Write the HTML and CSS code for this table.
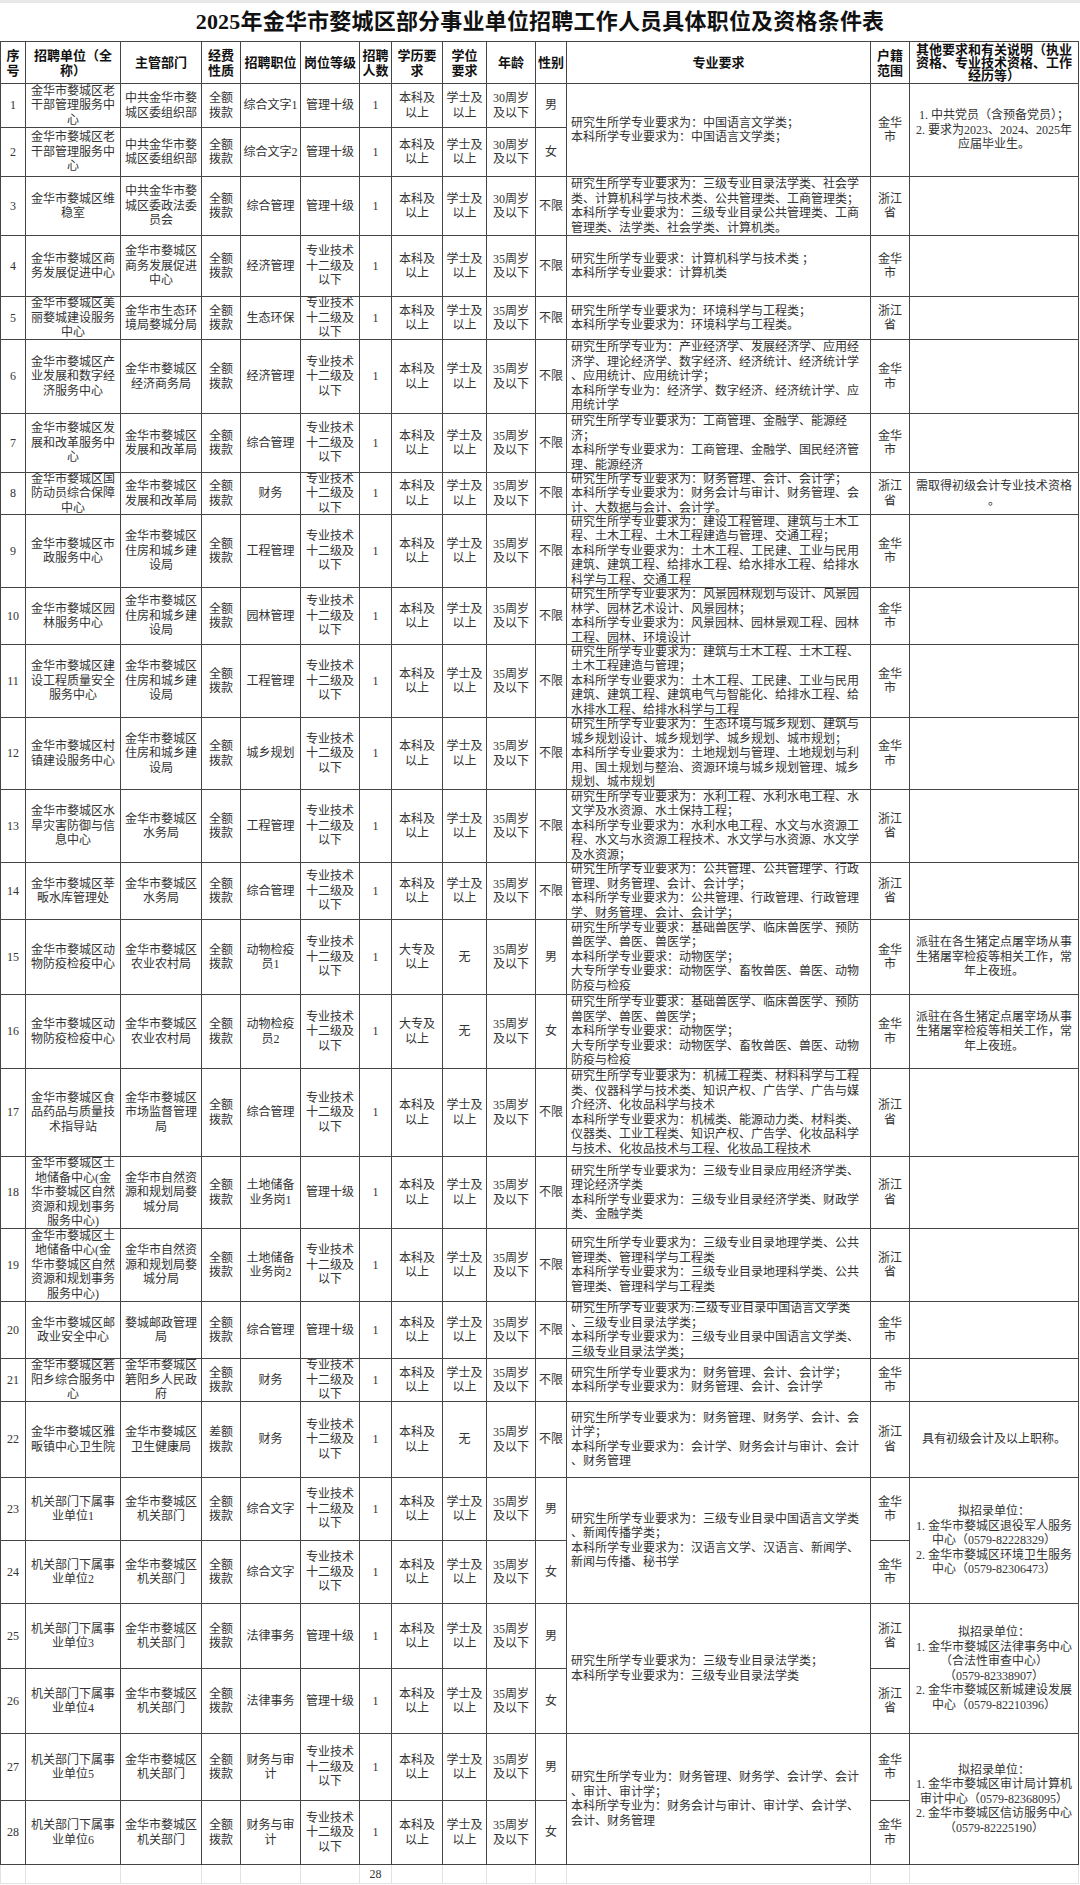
FILE: index.html
```html
<!DOCTYPE html>
<html lang="zh-CN">
<head>
<meta charset="utf-8">
<title>2025年金华市婺城区部分事业单位招聘工作人员具体职位及资格条件表</title>
<link rel="stylesheet" href="styles.css">
</head>
<body>
<div class="title">2025年金华市婺城区部分事业单位招聘工作人员具体职位及资格条件表</div>
<div class="sheet">
  <div class="c h">序<br>号</div><div class="c h">招聘单位（全<br>称）</div><div class="c h">主管部门</div><div class="c h">经费<br>性质</div><div class="c h">招聘职位</div><div class="c h">岗位等级</div><div class="c h">招聘<br>人数</div><div class="c h">学历要<br>求</div><div class="c h">学位<br>要求</div><div class="c h">年龄</div><div class="c h">性别</div><div class="c h">专业要求</div><div class="c h">户籍<br>范围</div><div class="c h hx">其他要求和有关说明（执业<br>资格、专业技术资格、工作<br>经历等）</div>

  <div class="c">1</div><div class="c">金华市婺城区老干部管理服务中心</div><div class="c">中共金华市婺城区委组织部</div><div class="c">全额拨款</div><div class="c">综合文字1</div><div class="c">管理十级</div><div class="c">1</div><div class="c">本科及以上</div><div class="c">学士及以上</div><div class="c">30周岁及以下</div><div class="c">男</div><div class="c m s2">研究生所学专业要求为：中国语言文学类；<br>本科所学专业要求为：中国语言文学类；</div><div class="c s2">金华市</div><div class="c o s2">1. 中共党员（含预备党员）；<br>2. 要求为2023、2024、2025年<br>应届毕业生。</div>

  <div class="c">2</div><div class="c">金华市婺城区老干部管理服务中心</div><div class="c">中共金华市婺城区委组织部</div><div class="c">全额拨款</div><div class="c">综合文字2</div><div class="c">管理十级</div><div class="c">1</div><div class="c">本科及以上</div><div class="c">学士及以上</div><div class="c">30周岁及以下</div><div class="c">女</div>

  <div class="c">3</div><div class="c">金华市婺城区维稳室</div><div class="c">中共金华市婺城区委政法委员会</div><div class="c">全额拨款</div><div class="c">综合管理</div><div class="c">管理十级</div><div class="c">1</div><div class="c">本科及以上</div><div class="c">学士及以上</div><div class="c">30周岁及以下</div><div class="c">不限</div><div class="c m">研究生所学专业要求为：三级专业目录法学类、社会学<br>类、计算机科学与技术类、公共管理类、工商管理类；<br>本科所学专业要求为：三级专业目录公共管理类、工商<br>管理类、法学类、社会学类、计算机类。</div><div class="c">浙江省</div><div class="c o"></div>

  <div class="c">4</div><div class="c">金华市婺城区商务发展促进中心</div><div class="c">金华市婺城区商务发展促进中心</div><div class="c">全额拨款</div><div class="c">经济管理</div><div class="c">专业技术十二级及以下</div><div class="c">1</div><div class="c">本科及以上</div><div class="c">学士及以上</div><div class="c">35周岁及以下</div><div class="c">不限</div><div class="c m">研究生所学专业要求：计算机科学与技术类 ；<br>本科所学专业要求：计算机类</div><div class="c">金华市</div><div class="c o"></div>

  <div class="c">5</div><div class="c">金华市婺城区美丽婺城建设服务中心</div><div class="c">金华市生态环境局婺城分局</div><div class="c">全额拨款</div><div class="c">生态环保</div><div class="c">专业技术十二级及以下</div><div class="c">1</div><div class="c">本科及以上</div><div class="c">学士及以上</div><div class="c">35周岁及以下</div><div class="c">不限</div><div class="c m">研究生所学专业要求为：环境科学与工程类；<br>本科所学专业要求为：环境科学与工程类。</div><div class="c">浙江省</div><div class="c o"></div>

  <div class="c">6</div><div class="c">金华市婺城区产业发展和数字经济服务中心</div><div class="c">金华市婺城区经济商务局</div><div class="c">全额拨款</div><div class="c">经济管理</div><div class="c">专业技术十二级及以下</div><div class="c">1</div><div class="c">本科及以上</div><div class="c">学士及以上</div><div class="c">35周岁及以下</div><div class="c">不限</div><div class="c m">研究生所学专业为：产业经济学、发展经济学、应用经<br>济学、理论经济学、数字经济、经济统计、经济统计学<br>、应用统计、应用统计学；<br>本科所学专业为：经济学、数字经济、经济统计学、应<br>用统计学</div><div class="c">金华市</div><div class="c o"></div>

  <div class="c">7</div><div class="c">金华市婺城区发展和改革服务中心</div><div class="c">金华市婺城区发展和改革局</div><div class="c">全额拨款</div><div class="c">综合管理</div><div class="c">专业技术十二级及以下</div><div class="c">1</div><div class="c">本科及以上</div><div class="c">学士及以上</div><div class="c">35周岁及以下</div><div class="c">不限</div><div class="c m">研究生所学专业要求为：工商管理、金融学、能源经<br>济；<br>本科所学专业要求为：工商管理、金融学、国民经济管<br>理、能源经济</div><div class="c">金华市</div><div class="c o"></div>

  <div class="c">8</div><div class="c">金华市婺城区国防动员综合保障中心</div><div class="c">金华市婺城区发展和改革局</div><div class="c">全额拨款</div><div class="c">财务</div><div class="c">专业技术十二级及以下</div><div class="c">1</div><div class="c">本科及以上</div><div class="c">学士及以上</div><div class="c">35周岁及以下</div><div class="c">不限</div><div class="c m">研究生所学专业要求为：财务管理、会计、会计学；<br>本科所学专业要求为：财务会计与审计、财务管理、会<br>计、大数据与会计、会计学。</div><div class="c">浙江省</div><div class="c o">需取得初级会计专业技术资格<br>。</div>

  <div class="c">9</div><div class="c">金华市婺城区市政服务中心</div><div class="c">金华市婺城区住房和城乡建设局</div><div class="c">全额拨款</div><div class="c">工程管理</div><div class="c">专业技术十二级及以下</div><div class="c">1</div><div class="c">本科及以上</div><div class="c">学士及以上</div><div class="c">35周岁及以下</div><div class="c">不限</div><div class="c m">研究生所学专业要求为：建设工程管理、建筑与土木工<br>程、土木工程、土木工程建造与管理、交通工程；<br>本科所学专业要求为：土木工程、工民建、工业与民用<br>建筑、建筑工程、给排水工程、给水排水工程、给排水<br>科学与工程、交通工程</div><div class="c">金华市</div><div class="c o"></div>

  <div class="c">10</div><div class="c">金华市婺城区园林服务中心</div><div class="c">金华市婺城区住房和城乡建设局</div><div class="c">全额拨款</div><div class="c">园林管理</div><div class="c">专业技术十二级及以下</div><div class="c">1</div><div class="c">本科及以上</div><div class="c">学士及以上</div><div class="c">35周岁及以下</div><div class="c">不限</div><div class="c m">研究生所学专业要求为：风景园林规划与设计、风景园<br>林学、园林艺术设计、风景园林；<br>本科所学专业要求为：风景园林、园林景观工程、园林<br>工程、园林、环境设计</div><div class="c">金华市</div><div class="c o"></div>

  <div class="c">11</div><div class="c">金华市婺城区建设工程质量安全服务中心</div><div class="c">金华市婺城区住房和城乡建设局</div><div class="c">全额拨款</div><div class="c">工程管理</div><div class="c">专业技术十二级及以下</div><div class="c">1</div><div class="c">本科及以上</div><div class="c">学士及以上</div><div class="c">35周岁及以下</div><div class="c">不限</div><div class="c m">研究生所学专业要求为：建筑与土木工程、土木工程、<br>土木工程建造与管理；<br>本科所学专业要求为：土木工程、工民建、工业与民用<br>建筑、建筑工程、建筑电气与智能化、给排水工程、给<br>水排水工程、给排水科学与工程</div><div class="c">金华市</div><div class="c o"></div>

  <div class="c">12</div><div class="c">金华市婺城区村镇建设服务中心</div><div class="c">金华市婺城区住房和城乡建设局</div><div class="c">全额拨款</div><div class="c">城乡规划</div><div class="c">专业技术十二级及以下</div><div class="c">1</div><div class="c">本科及以上</div><div class="c">学士及以上</div><div class="c">35周岁及以下</div><div class="c">不限</div><div class="c m">研究生所学专业要求为：生态环境与城乡规划、建筑与<br>城乡规划设计、城乡规划学、城乡规划、城市规划；<br>本科所学专业要求为：土地规划与管理、土地规划与利<br>用、国土规划与整治、资源环境与城乡规划管理、城乡<br>规划、城市规划</div><div class="c">金华市</div><div class="c o"></div>

  <div class="c">13</div><div class="c">金华市婺城区水旱灾害防御与信息中心</div><div class="c">金华市婺城区水务局</div><div class="c">全额拨款</div><div class="c">工程管理</div><div class="c">专业技术十二级及以下</div><div class="c">1</div><div class="c">本科及以上</div><div class="c">学士及以上</div><div class="c">35周岁及以下</div><div class="c">不限</div><div class="c m">研究生所学专业要求为：水利工程、水利水电工程、水<br>文学及水资源、水土保持工程；<br>本科所学专业要求为：水利水电工程、水文与水资源工<br>程、水文与水资源工程技术、水文学与水资源、水文学<br>及水资源；</div><div class="c">浙江省</div><div class="c o"></div>

  <div class="c">14</div><div class="c">金华市婺城区莘畈水库管理处</div><div class="c">金华市婺城区水务局</div><div class="c">全额拨款</div><div class="c">综合管理</div><div class="c">专业技术十二级及以下</div><div class="c">1</div><div class="c">本科及以上</div><div class="c">学士及以上</div><div class="c">35周岁及以下</div><div class="c">不限</div><div class="c m">研究生所学专业要求为：公共管理、公共管理学、行政<br>管理、财务管理、会计、会计学；<br>本科所学专业要求为：公共管理、行政管理、行政管理<br>学、财务管理、会计、会计学；</div><div class="c">浙江省</div><div class="c o"></div>

  <div class="c">15</div><div class="c">金华市婺城区动物防疫检疫中心</div><div class="c">金华市婺城区农业农村局</div><div class="c">全额拨款</div><div class="c">动物检疫员1</div><div class="c">专业技术十二级及以下</div><div class="c">1</div><div class="c">大专及以上</div><div class="c">无</div><div class="c">35周岁及以下</div><div class="c">男</div><div class="c m">研究生所学专业要求：基础兽医学、临床兽医学、预防<br>兽医学、兽医、兽医学；<br>本科所学专业要求：动物医学；<br>大专所学专业要求：动物医学、畜牧兽医、兽医、动物<br>防疫与检疫</div><div class="c">金华市</div><div class="c o">派驻在各生猪定点屠宰场从事<br>生猪屠宰检疫等相关工作，常<br>年上夜班。</div>

  <div class="c">16</div><div class="c">金华市婺城区动物防疫检疫中心</div><div class="c">金华市婺城区农业农村局</div><div class="c">全额拨款</div><div class="c">动物检疫员2</div><div class="c">专业技术十二级及以下</div><div class="c">1</div><div class="c">大专及以上</div><div class="c">无</div><div class="c">35周岁及以下</div><div class="c">女</div><div class="c m">研究生所学专业要求：基础兽医学、临床兽医学、预防<br>兽医学、兽医、兽医学；<br>本科所学专业要求：动物医学；<br>大专所学专业要求：动物医学、畜牧兽医、兽医、动物<br>防疫与检疫</div><div class="c">金华市</div><div class="c o">派驻在各生猪定点屠宰场从事<br>生猪屠宰检疫等相关工作，常<br>年上夜班。</div>

  <div class="c">17</div><div class="c">金华市婺城区食品药品与质量技术指导站</div><div class="c">金华市婺城区市场监督管理局</div><div class="c">全额拨款</div><div class="c">综合管理</div><div class="c">专业技术十二级及以下</div><div class="c">1</div><div class="c">本科及以上</div><div class="c">学士及以上</div><div class="c">35周岁及以下</div><div class="c">不限</div><div class="c m">研究生所学专业要求为：机械工程类、材料科学与工程<br>类、仪器科学与技术类、知识产权、广告学、广告与媒<br>介经济、化妆品科学与技术<br>本科所学专业要求为：机械类、能源动力类、材料类、<br>仪器类、工业工程类、知识产权、广告学、化妆品科学<br>与技术、化妆品技术与工程、化妆品工程技术</div><div class="c">浙江省</div><div class="c o"></div>

  <div class="c">18</div><div class="c">金华市婺城区土<br>地储备中心(金<br>华市婺城区自然<br>资源和规划事务<br>服务中心)</div><div class="c">金华市自然资源和规划局婺城分局</div><div class="c">全额拨款</div><div class="c">土地储备业务岗1</div><div class="c">管理十级</div><div class="c">1</div><div class="c">本科及以上</div><div class="c">学士及以上</div><div class="c">35周岁及以下</div><div class="c">不限</div><div class="c m">研究生所学专业要求为：三级专业目录应用经济学类、<br>理论经济学类<br>本科所学专业要求为：三级专业目录经济学类、财政学<br>类、金融学类</div><div class="c">浙江省</div><div class="c o"></div>

  <div class="c">19</div><div class="c">金华市婺城区土<br>地储备中心(金<br>华市婺城区自然<br>资源和规划事务<br>服务中心)</div><div class="c">金华市自然资源和规划局婺城分局</div><div class="c">全额拨款</div><div class="c">土地储备业务岗2</div><div class="c">专业技术十二级及以下</div><div class="c">1</div><div class="c">本科及以上</div><div class="c">学士及以上</div><div class="c">35周岁及以下</div><div class="c">不限</div><div class="c m">研究生所学专业要求为：三级专业目录地理学类、公共<br>管理类、管理科学与工程类<br>本科所学专业要求为：三级专业目录地理科学类、公共<br>管理类、管理科学与工程类</div><div class="c">浙江省</div><div class="c o"></div>

  <div class="c">20</div><div class="c">金华市婺城区邮政业安全中心</div><div class="c">婺城邮政管理局</div><div class="c">全额拨款</div><div class="c">综合管理</div><div class="c">管理十级</div><div class="c">1</div><div class="c">本科及以上</div><div class="c">学士及以上</div><div class="c">35周岁及以下</div><div class="c">不限</div><div class="c m">研究生所学专业要求为:三级专业目录中国语言文学类<br>、三级专业目录法学类；<br>本科所学专业要求为：三级专业目录中国语言文学类、<br>三级专业目录法学类；</div><div class="c">金华市</div><div class="c o"></div>

  <div class="c">21</div><div class="c">金华市婺城区箬阳乡综合服务中心</div><div class="c">金华市婺城区箬阳乡人民政府</div><div class="c">全额拨款</div><div class="c">财务</div><div class="c">专业技术十二级及以下</div><div class="c">1</div><div class="c">本科及以上</div><div class="c">学士及以上</div><div class="c">35周岁及以下</div><div class="c">不限</div><div class="c m">研究生所学专业要求为：财务管理、会计、会计学；<br>本科所学专业要求为：财务管理、会计、会计学</div><div class="c">金华市</div><div class="c o"></div>

  <div class="c">22</div><div class="c">金华市婺城区雅畈镇中心卫生院</div><div class="c">金华市婺城区卫生健康局</div><div class="c">差额拨款</div><div class="c">财务</div><div class="c">专业技术十二级及以下</div><div class="c">1</div><div class="c">本科及以上</div><div class="c">无</div><div class="c">35周岁及以下</div><div class="c">不限</div><div class="c m">研究生所学专业要求为：财务管理、财务学、会计、会<br>计学；<br>本科所学专业要求为：会计学、财务会计与审计、会计<br>、财务管理</div><div class="c">浙江省</div><div class="c o">具有初级会计及以上职称。</div>

  <div class="c">23</div><div class="c">机关部门下属事业单位1</div><div class="c">金华市婺城区机关部门</div><div class="c">全额拨款</div><div class="c">综合文字</div><div class="c">专业技术十二级及以下</div><div class="c">1</div><div class="c">本科及以上</div><div class="c">学士及以上</div><div class="c">35周岁及以下</div><div class="c">男</div><div class="c m s2">研究生所学专业要求为：三级专业目录中国语言文学类<br>、新闻传播学类；<br>本科所学专业要求为：汉语言文学、汉语言、新闻学、<br>新闻与传播、秘书学</div><div class="c">金华市</div><div class="c o s2">拟招录单位：<br>1. 金华市婺城区退役军人服务<br>中心（0579-82228329）<br>2. 金华市婺城区环境卫生服务<br>中心（0579-82306473）</div>

  <div class="c">24</div><div class="c">机关部门下属事业单位2</div><div class="c">金华市婺城区机关部门</div><div class="c">全额拨款</div><div class="c">综合文字</div><div class="c">专业技术十二级及以下</div><div class="c">1</div><div class="c">本科及以上</div><div class="c">学士及以上</div><div class="c">35周岁及以下</div><div class="c">女</div><div class="c">金华市</div>

  <div class="c">25</div><div class="c">机关部门下属事业单位3</div><div class="c">金华市婺城区机关部门</div><div class="c">全额拨款</div><div class="c">法律事务</div><div class="c">管理十级</div><div class="c">1</div><div class="c">本科及以上</div><div class="c">学士及以上</div><div class="c">35周岁及以下</div><div class="c">男</div><div class="c m s2">研究生所学专业要求为：三级专业目录法学类；<br>本科所学专业要求为：三级专业目录法学类</div><div class="c">浙江省</div><div class="c o s2">拟招录单位：<br>1. 金华市婺城区法律事务中心<br>（合法性审查中心）<br>（0579-82338907）<br>2. 金华市婺城区新城建设发展<br>中心（0579-82210396）</div>

  <div class="c">26</div><div class="c">机关部门下属事业单位4</div><div class="c">金华市婺城区机关部门</div><div class="c">全额拨款</div><div class="c">法律事务</div><div class="c">管理十级</div><div class="c">1</div><div class="c">本科及以上</div><div class="c">学士及以上</div><div class="c">35周岁及以下</div><div class="c">女</div><div class="c">浙江省</div>

  <div class="c">27</div><div class="c">机关部门下属事业单位5</div><div class="c">金华市婺城区机关部门</div><div class="c">全额拨款</div><div class="c">财务与审计</div><div class="c">专业技术十二级及以下</div><div class="c">1</div><div class="c">本科及以上</div><div class="c">学士及以上</div><div class="c">35周岁及以下</div><div class="c">男</div><div class="c m s2">研究生所学专业为：财务管理、财务学、会计学、会计<br>、审计、审计学；<br>本科所学专业为：财务会计与审计、审计学、会计学、<br>会计、财务管理</div><div class="c">金华市</div><div class="c o s2">拟招录单位：<br>1. 金华市婺城区审计局计算机<br>审计中心（0579-82368095）<br>2. 金华市婺城区信访服务中心<br>（0579-82225190）</div>

  <div class="c">28</div><div class="c">机关部门下属事业单位6</div><div class="c">金华市婺城区机关部门</div><div class="c">全额拨款</div><div class="c">财务与审计</div><div class="c">专业技术十二级及以下</div><div class="c">1</div><div class="c">本科及以上</div><div class="c">学士及以上</div><div class="c">35周岁及以下</div><div class="c">女</div><div class="c">金华市</div>
</div>
<div class="foot">
  <div class="c"></div><div class="c"></div><div class="c"></div><div class="c"></div><div class="c"></div><div class="c"></div><div class="c">28</div><div class="c"></div><div class="c"></div><div class="c"></div><div class="c"></div><div class="c"></div><div class="c"></div><div class="c"></div>
</div>
</body>
</html>
```
FILE: styles.css
```css
* {
  box-sizing: border-box;
}

body {
  margin: 0;
  background: #ffffff;
  font-family: "Liberation Serif", "Noto Sans CJK SC", serif;
  font-size: 12px;
  line-height: 14.5px;
  color: #333333;
}

.title {
  height: 41px;
  border-top: 3px solid #e8e8e8;
  display: flex;
  align-items: center;
  justify-content: center;
  font-size: 22px;
  font-weight: bold;
  color: #111111;
  letter-spacing: 0.2px;
}

.sheet,
.foot {
  display: grid;
  width: 1079px;
  gap: 1px;
  grid-template-columns: 24px 94px 80px 38px 59px 58px 31px 50px 43px 48px 30px 303px 38px 168px;
}

.sheet {
  padding: 1px;
  background: #454545;
  grid-template-rows: 41px 43px 48px 58px 60px 42px 73px 58px 41px 72px 56px 72px 71px 72px 56px 74px 73px 87px 71px 72px 56px 42px 75px 62px 62px 64px 64px 66px 63px;
}

.foot {
  padding: 0 1px 1px;
  background: #e2e2e2;
  grid-template-rows: 18px;
}

.c {
  background: #ffffff;
  display: flex;
  align-items: center;
  justify-content: center;
  text-align: center;
  overflow: hidden;
  padding: 0 2px;
  min-width: 0;
  min-height: 0;
}

.h {
  font-weight: bold;
  font-size: 13px;
  line-height: 15px;
  color: #111111;
  white-space: nowrap;
}

.hx {
  line-height: 13px;
}

.m {
  justify-content: flex-start;
  text-align: left;
  white-space: nowrap;
  padding: 0 2px 0 4px;
}

.o {
  white-space: nowrap;
}

.s2 {
  grid-row: span 2;
}
```
